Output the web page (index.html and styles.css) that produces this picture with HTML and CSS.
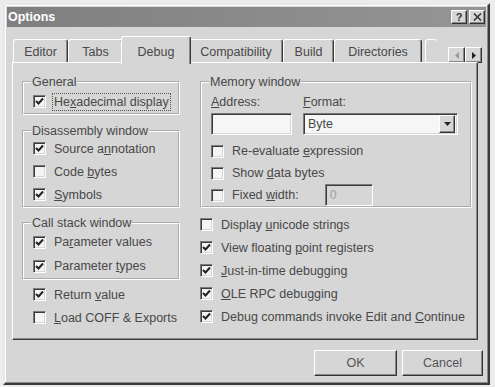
FILE: index.html
```html
<!DOCTYPE html>
<html lang="en">
<head>
  <meta charset="UTF-8">
  <title>Options</title>
  <link rel="stylesheet" href="styles.css">
</head>
<body>
  <div class="window">
    <div class="titlebar">
      <span class="title">Options</span>
      <div class="cap-btns">
        <span class="cap-btn">?</span>
        <span class="cap-btn">
          <svg width="9" height="8" viewBox="0 0 9 8"><path d="M1 0.5 L8 7.5 M8 0.5 L1 7.5" stroke="#333" stroke-width="1.6"/></svg>
        </span>
      </div>
    </div>

    <div class="tabs">
      <div class="tab t-editor">Editor</div>
      <div class="tab t-tabs">Tabs</div>
      <div class="tab active t-debug">Debug</div>
      <div class="tab t-compat">Compatibility</div>
      <div class="tab t-build">Build</div>
      <div class="tab t-dirs">Directories</div>
      <div class="tab t-part"></div>
      <div class="scroller">
        <span class="arrow off"><svg width="4" height="7" viewBox="0 0 4 7"><path d="M4 0 L0 3.5 L4 7 Z" fill="#9a9a9a"/></svg></span>
        <span class="arrow"><svg width="4" height="7" viewBox="0 0 4 7"><path d="M0 0 L4 3.5 L0 7 Z" fill="#222"/></svg></span>
      </div>
    </div>

    <div class="panel">
      <div class="col-left">
        <fieldset class="group">
          <legend>General</legend>
          <div class="check first-general">
            <span class="box"><svg width="9" height="9" viewBox="0 0 9 9"><path d="M1 4 L3.5 6.5 L8 1.5" fill="none" stroke="#222" stroke-width="2"/></svg></span>
            <span class="focus">He<u>x</u>adecimal display</span>
          </div>
        </fieldset>

        <fieldset class="group disasm">
          <legend>Disassembly window</legend>
          <div class="check first">
            <span class="box"><svg width="9" height="9" viewBox="0 0 9 9"><path d="M1 4 L3.5 6.5 L8 1.5" fill="none" stroke="#222" stroke-width="2"/></svg></span>
            <span>Source a<u>n</u>notation</span>
          </div>
          <div class="check">
            <span class="box"></span>
            <span>Code <u>b</u>ytes</span>
          </div>
          <div class="check">
            <span class="box"><svg width="9" height="9" viewBox="0 0 9 9"><path d="M1 4 L3.5 6.5 L8 1.5" fill="none" stroke="#222" stroke-width="2"/></svg></span>
            <span><u>S</u>ymbols</span>
          </div>
        </fieldset>

        <fieldset class="group callstack">
          <legend>Call stack window</legend>
          <div class="check tall">
            <span class="box"><svg width="9" height="9" viewBox="0 0 9 9"><path d="M1 4 L3.5 6.5 L8 1.5" fill="none" stroke="#222" stroke-width="2"/></svg></span>
            <span>Pa<u>r</u>ameter values</span>
          </div>
          <div class="check tall">
            <span class="box"><svg width="9" height="9" viewBox="0 0 9 9"><path d="M1 4 L3.5 6.5 L8 1.5" fill="none" stroke="#222" stroke-width="2"/></svg></span>
            <span>Parameter <u>t</u>ypes</span>
          </div>
        </fieldset>

        <div class="loose">
          <div class="check">
            <span class="box"><svg width="9" height="9" viewBox="0 0 9 9"><path d="M1 4 L3.5 6.5 L8 1.5" fill="none" stroke="#222" stroke-width="2"/></svg></span>
            <span>Return <u>v</u>alue</span>
          </div>
          <div class="check">
            <span class="box"></span>
            <span><u>L</u>oad COFF &amp; Exports</span>
          </div>
        </div>
      </div>

      <div class="col-right">
        <fieldset class="group memory">
          <legend>Memory window</legend>
          <div class="mem-fields">
            <label><u>A</u>ddress:</label>
            <label><u>F</u>ormat:</label>
            <div class="field"></div>
            <div class="field select">
              <span>Byte</span>
              <span class="drop"><svg width="7" height="4" viewBox="0 0 7 4"><path d="M0 0 L7 0 L3.5 4 Z" fill="#222"/></svg></span>
            </div>
          </div>
          <div class="mem-checks">
            <div class="check short">
              <span class="box"></span>
              <span>Re-evaluate <u>e</u>xpression</span>
            </div>
            <div class="check short">
              <span class="box"></span>
              <span>Show <u>d</u>ata bytes</span>
            </div>
            <div class="check short">
              <span class="box"></span>
              <span>Fixed <u>w</u>idth:</span>
              <div class="field small">0</div>
            </div>
          </div>
        </fieldset>

        <div class="loose right">
          <div class="check">
            <span class="box"></span>
            <span>Display <u>u</u>nicode strings</span>
          </div>
          <div class="check">
            <span class="box"><svg width="9" height="9" viewBox="0 0 9 9"><path d="M1 4 L3.5 6.5 L8 1.5" fill="none" stroke="#222" stroke-width="2"/></svg></span>
            <span>View floating <u>p</u>oint registers</span>
          </div>
          <div class="check">
            <span class="box"><svg width="9" height="9" viewBox="0 0 9 9"><path d="M1 4 L3.5 6.5 L8 1.5" fill="none" stroke="#222" stroke-width="2"/></svg></span>
            <span><u>J</u>ust-in-time debugging</span>
          </div>
          <div class="check">
            <span class="box"><svg width="9" height="9" viewBox="0 0 9 9"><path d="M1 4 L3.5 6.5 L8 1.5" fill="none" stroke="#222" stroke-width="2"/></svg></span>
            <span><u>O</u>LE RPC debugging</span>
          </div>
          <div class="check">
            <span class="box"><svg width="9" height="9" viewBox="0 0 9 9"><path d="M1 4 L3.5 6.5 L8 1.5" fill="none" stroke="#222" stroke-width="2"/></svg></span>
            <span>Debug commands invoke Edit and <u>C</u>ontinue</span>
          </div>
        </div>
      </div>
    </div>

    <div class="footer">
      <button class="btn ok">OK</button>
      <button class="btn cancel">Cancel</button>
    </div>
  </div>
</body>
</html>
```

FILE: styles.css
```css
body {
  margin: 0;
  background: #ececec;
  font-family: "Liberation Sans", Arial, sans-serif;
  font-size: 12.5px;
  color: #484848;
}

.window {
  margin: 3px 0 0 3px;
  width: 487px;
  height: 382px;
  box-sizing: border-box;
  background: #d6d6d6;
  border: 2px solid;
  border-color: #e8e8e8 #3a3a3a #3a3a3a #e8e8e8;
  box-shadow: inset -1px -1px 0 #8a8a8a, inset 1px 1px 0 #fff;
  display: flex;
  flex-direction: column;
}

/* title bar */
.titlebar {
  margin: 2px 2px 0;
  height: 20px;
  background: linear-gradient(90deg, #7f7f7f, #959595);
  display: flex;
  align-items: center;
  padding: 0 1px 0 1px;
  color: #fff;
  font-weight: bold;
}

.cap-btns {
  margin-left: auto;
  display: flex;
  gap: 2px;
}

.cap-btn {
  width: 16px;
  height: 14px;
  box-sizing: border-box;
  background: #d6d6d6;
  border: 1px solid;
  border-color: #fff #333 #333 #fff;
  box-shadow: inset -1px -1px 0 #888;
  color: #333;
  font-size: 11px;
  display: flex;
  align-items: center;
  justify-content: center;
}

/* tabs */
.tabs {
  margin: 9px 6px 0 8px;
  height: 26px;
  display: flex;
  align-items: flex-end;
}

.tab {
  height: 23px;
  box-sizing: border-box;
  border: 1px solid;
  border-bottom: none;
  border-color: #fff #3a3a3a #fff #fff;
  box-shadow: inset -1px 0 0 #8a8a8a;
  border-radius: 3px 3px 0 0;
  display: flex;
  align-items: flex-end;
  justify-content: center;
  line-height: 14px;
  padding-bottom: 3px;
}

.tab.active {
  height: 28px;
  margin: 0 -2px -2px;
  background: #d6d6d6;
  position: relative;
  z-index: 1;
  padding-bottom: 5px;
}

.t-editor { width: 55px; }
.t-tabs { width: 55px; }
.t-debug { width: 70px; }
.t-compat { width: 94px; }
.t-build { width: 51px; }
.t-dirs { width: 88px; }

.t-part {
  width: 12px;
  margin-left: 3px;
  border-right: none;
  box-shadow: none;
}

.scroller {
  margin-left: auto;
  display: flex;
  margin-bottom: -1px;
}

.arrow {
  width: 17px;
  height: 16px;
  box-sizing: border-box;
  border: 1px solid;
  border-color: #fff #333 #333 #fff;
  box-shadow: inset -1px -1px 0 #888;
  display: flex;
  align-items: center;
  justify-content: center;
}

/* tab page */
.panel {
  margin: 0 10px 0 7px;
  height: 278px;
  box-sizing: border-box;
  border: 1px solid;
  border-color: #fff #3a3a3a #3a3a3a #fff;
  box-shadow: inset -1px -1px 0 #8a8a8a;
  padding: 12px 4px 0 9px;
  display: flex;
  gap: 20px;
}

.col-left {
  width: 158px;
}

.col-right {
  width: 272px;
}

.group {
  margin: 0;
  padding: 0 9px 0 9px;
  border: 2px groove #fff;
  min-width: 0;
}

.group legend {
  padding: 0 1px;
  margin-left: -2px;
  line-height: 14px;
}

.disasm {
  margin-top: 9px;
}

.callstack {
  margin-top: 8px;
}

/* checkbox rows */
.check {
  height: 23px;
  display: flex;
  align-items: center;
  gap: 8px;
  white-space: nowrap;
}

.check.first-general {
  margin-top: 1px;
}

.check.first {
  margin-top: -1px;
}

.check.tall {
  height: 24px;
}

.check.short {
  height: 22px;
}

.box {
  width: 13px;
  height: 13px;
  flex: none;
  box-sizing: border-box;
  background: #f4f4f4;
  border: 1px solid;
  border-color: #7a7a7a #fff #fff #7a7a7a;
  box-shadow: inset 1px 1px 0 #3a3a3a, inset -1px -1px 0 #d6d6d6;
  display: flex;
  align-items: center;
  justify-content: center;
}

.focus {
  outline: 1px dotted #555;
  outline-offset: 1px;
}

.loose {
  margin-top: 3px;
  padding-left: 11px;
}

.loose.right {
  margin-top: 5px;
  padding-left: 0;
}

/* memory window */
.mem-fields {
  margin-top: 6px;
  display: grid;
  grid-template-columns: 81px 155px;
  column-gap: 11px;
  row-gap: 4px;
}

.mem-fields label {
  line-height: 14px;
}

.field {
  height: 22px;
  box-sizing: border-box;
  background: #f6f6f6;
  border: 1px solid;
  border-color: #7a7a7a #fff #fff #7a7a7a;
  box-shadow: inset 1px 1px 0 #3a3a3a, inset -1px -1px 0 #d6d6d6;
}

.select {
  display: flex;
  align-items: center;
  padding: 0 2px 0 4px;
}

.drop {
  margin-left: auto;
  width: 16px;
  height: 18px;
  box-sizing: border-box;
  background: #d6d6d6;
  border: 1px solid;
  border-color: #fff #333 #333 #fff;
  box-shadow: inset -1px -1px 0 #888;
  display: flex;
  align-items: center;
  justify-content: center;
}

.mem-checks {
  margin-top: 5px;
}

.field.small {
  width: 48px;
  margin-left: 18px;
  background: #d6d6d6;
  color: #a0a0a0;
  padding-left: 4px;
  line-height: 20px;
}

/* buttons */
.footer {
  margin-top: 10px;
  padding-right: 5px;
  display: flex;
  justify-content: flex-end;
  gap: 5px;
}

.btn {
  height: 26px;
  font: inherit;
  color: #555;
  background: #d6d6d6;
  border: 1px solid;
  border-color: #fff #333 #333 #fff;
  box-shadow: inset -1px -1px 0 #888;
  padding: 0;
}

.ok {
  width: 83px;
}

.cancel {
  width: 81px;
}
```
